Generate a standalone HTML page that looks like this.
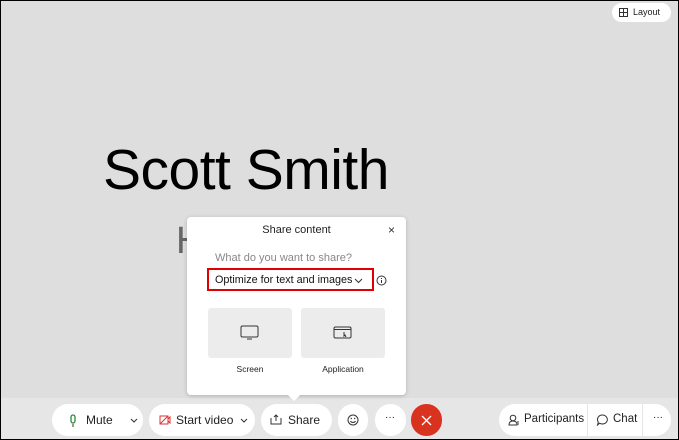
<!DOCTYPE html>
<html><head><style>
*{margin:0;padding:0;box-sizing:border-box}
body{width:679px;height:440px;overflow:hidden;font-family:"Liberation Sans",sans-serif;background:#000;position:relative}
.main{position:absolute;left:1px;top:1px;width:677px;height:438px;background:#dedede}
.bar{position:absolute;left:1px;top:398px;width:677px;height:41px;background:#e6e6e6}
.ab{position:absolute;white-space:nowrap}
.pill{position:absolute;background:#fff;border-radius:16px;height:32px;top:404px;font-size:12px;color:#222;white-space:nowrap}
.pill>*{position:absolute}
.pill span.t{top:9px}
.pop{position:absolute;left:187px;top:217px;width:219px;height:178px;background:#fff;border-radius:4px;box-shadow:0 1px 4px rgba(0,0,0,.2)}
.tile{position:absolute;top:308px;width:84px;height:50px;background:#ececec;border-radius:3px}
</style></head><body>
<div class="main"></div>
<div class="bar"></div>
<div class="pill" style="left:612px;top:3px;height:19px;width:59px;border-radius:10px;font-size:9px">
<svg style="left:7px;top:5px" width="9" height="9" viewBox="0 0 9 9"><rect x=".5" y=".5" width="8" height="8" fill="none" stroke="#333"/><path d="M4.5 0V9M0 4.5H9" stroke="#333"/></svg><span style="left:21px;top:4px">Layout</span></div>
<div class="ab" style="left:103px;top:137px;font-size:57px;color:#000;letter-spacing:-0.5px">Scott Smith</div>
<div class="ab" style="left:176px;top:220px;font-size:38px;color:#666">H</div>
<div class="pop">
<div class="ab" style="left:0;width:219px;top:7px;text-align:center;font-size:11px;color:#222">Share content</div>
<div class="ab" style="left:201px;top:6px;font-size:12px;color:#333">×</div>
<div class="ab" style="left:28px;top:35px;font-size:11px;color:#888">What do you want to share?</div>
<div class="ab" style="left:20px;top:51px;width:167px;height:23px;border:2px solid #e00000"></div>
<div class="ab" style="left:28px;top:57px;font-size:10.8px;color:#111">Optimize for text and images</div>
<svg class="ab" style="left:167px;top:61px" width="9" height="6"><path d="M1 1l3.5 3.5L8 1" stroke="#333" fill="none"/></svg>
<svg class="ab" style="left:189px;top:58px" width="11" height="11"><circle cx="5.5" cy="5.5" r="4.5" stroke="#333" fill="none"/><path d="M5.5 5v3M5.5 3v1" stroke="#333"/></svg>
<div class="ab" style="left:21px;width:84px;top:147px;text-align:center;font-size:8.5px;color:#222">Screen</div>
<div class="ab" style="left:114px;width:84px;top:147px;text-align:center;font-size:8.5px;color:#222">Application</div>
</div>
<div class="tile" style="left:208px"><svg style="position:absolute;left:32px;top:17px" width="20" height="16"><rect x="1" y="1" width="17" height="11" rx="1.5" fill="none" stroke="#333"/><path d="M7 14h5" stroke="#333"/></svg></div>
<div class="tile" style="left:301px"><svg style="position:absolute;left:32px;top:17px" width="20" height="16"><rect x="1" y="2" width="17" height="11" rx="1.5" fill="none" stroke="#333"/><path d="M1 4.5h17" stroke="#333"/><path d="M11 7l0 4l1-1l1 2" stroke="#333" fill="none"/></svg></div>
<svg class="ab" style="left:287px;top:394px" width="14" height="7"><path d="M0 0L7 7L14 0Z" fill="#fff"/></svg>
<div class="pill" style="left:52px;width:91px"><svg style="left:17px;top:10px" width="8" height="13"><rect x="2" y="1" width="4" height="8" rx="2" fill="none" stroke="#2a8a3a" stroke-width="1.3"/><path d="M4 10v3" stroke="#333"/></svg><span class="t" style="left:34px">Mute</span><svg style="left:78px;top:14px" width="8" height="5"><path d="M1 1l3 3 3-3" stroke="#333" fill="none"/></svg></div>
<div class="pill" style="left:149px;width:106px"><svg style="left:10px;top:11px" width="12" height="10"><rect x="1" y="1" width="8" height="8" fill="none" stroke="#d33"/><path d="M9 4l2-2v6l-2-2M1 9L9 1" stroke="#d33" fill="none"/></svg><span class="t" style="left:27px">Start video</span><svg style="left:91px;top:14px" width="8" height="5"><path d="M1 1l3 3 3-3" stroke="#333" fill="none"/></svg></div>
<div class="pill" style="left:261px;width:71px"><svg style="left:9px;top:10px" width="12" height="11"><path d="M1 4v6h10V4M6 1v6M4 3l2-2 2 2" stroke="#333" fill="none"/></svg><span class="t" style="left:27px">Share</span></div>
<div class="pill" style="left:338px;width:30px"><svg style="left:9px;top:10px" width="12" height="12"><circle cx="6" cy="6" r="5" fill="none" stroke="#333"/><path d="M3.5 7c1 2 4 2 5 0" stroke="#333" fill="none"/><circle cx="4.3" cy="4.5" r=".7" fill="#333"/><circle cx="7.7" cy="4.5" r=".7" fill="#333"/></svg></div>
<div class="pill" style="left:375px;width:31px"><span class="t" style="left:10px;top:8px;font-size:10px">···</span></div>
<div class="pill" style="left:411px;width:31px;background:#d9321f"><svg style="left:10px;top:11px" width="11" height="11"><path d="M1 1l9 9M10 1l-9 9" stroke="#fff" stroke-width="1.3"/></svg></div>
<div class="pill" style="left:499px;width:172px;font-size:11.5px"><svg style="left:9px;top:10px" width="12" height="12"><circle cx="5" cy="4" r="2.8" fill="none" stroke="#333"/><path d="M1 11c0-3 2-4 4-4s4 1 4 4zM9 10h2M9 8h2" stroke="#333" fill="none"/></svg><span class="t" style="left:25px">Participants</span><span style="left:88px;top:0;height:32px;border-left:1px solid #e6e6e6"></span><svg style="left:97px;top:10px" width="13" height="12"><path d="M6.5 1a5 4.5 0 1 1-3 8.2L1.5 11l.8-3A5 4.5 0 0 1 6.5 1z" fill="none" stroke="#333"/></svg><span class="t" style="left:114px">Chat</span><span style="left:143px;top:0;height:32px;border-left:1px solid #e6e6e6"></span><span class="t" style="left:154px;top:8px;font-size:10px">···</span></div>
</body></html>
